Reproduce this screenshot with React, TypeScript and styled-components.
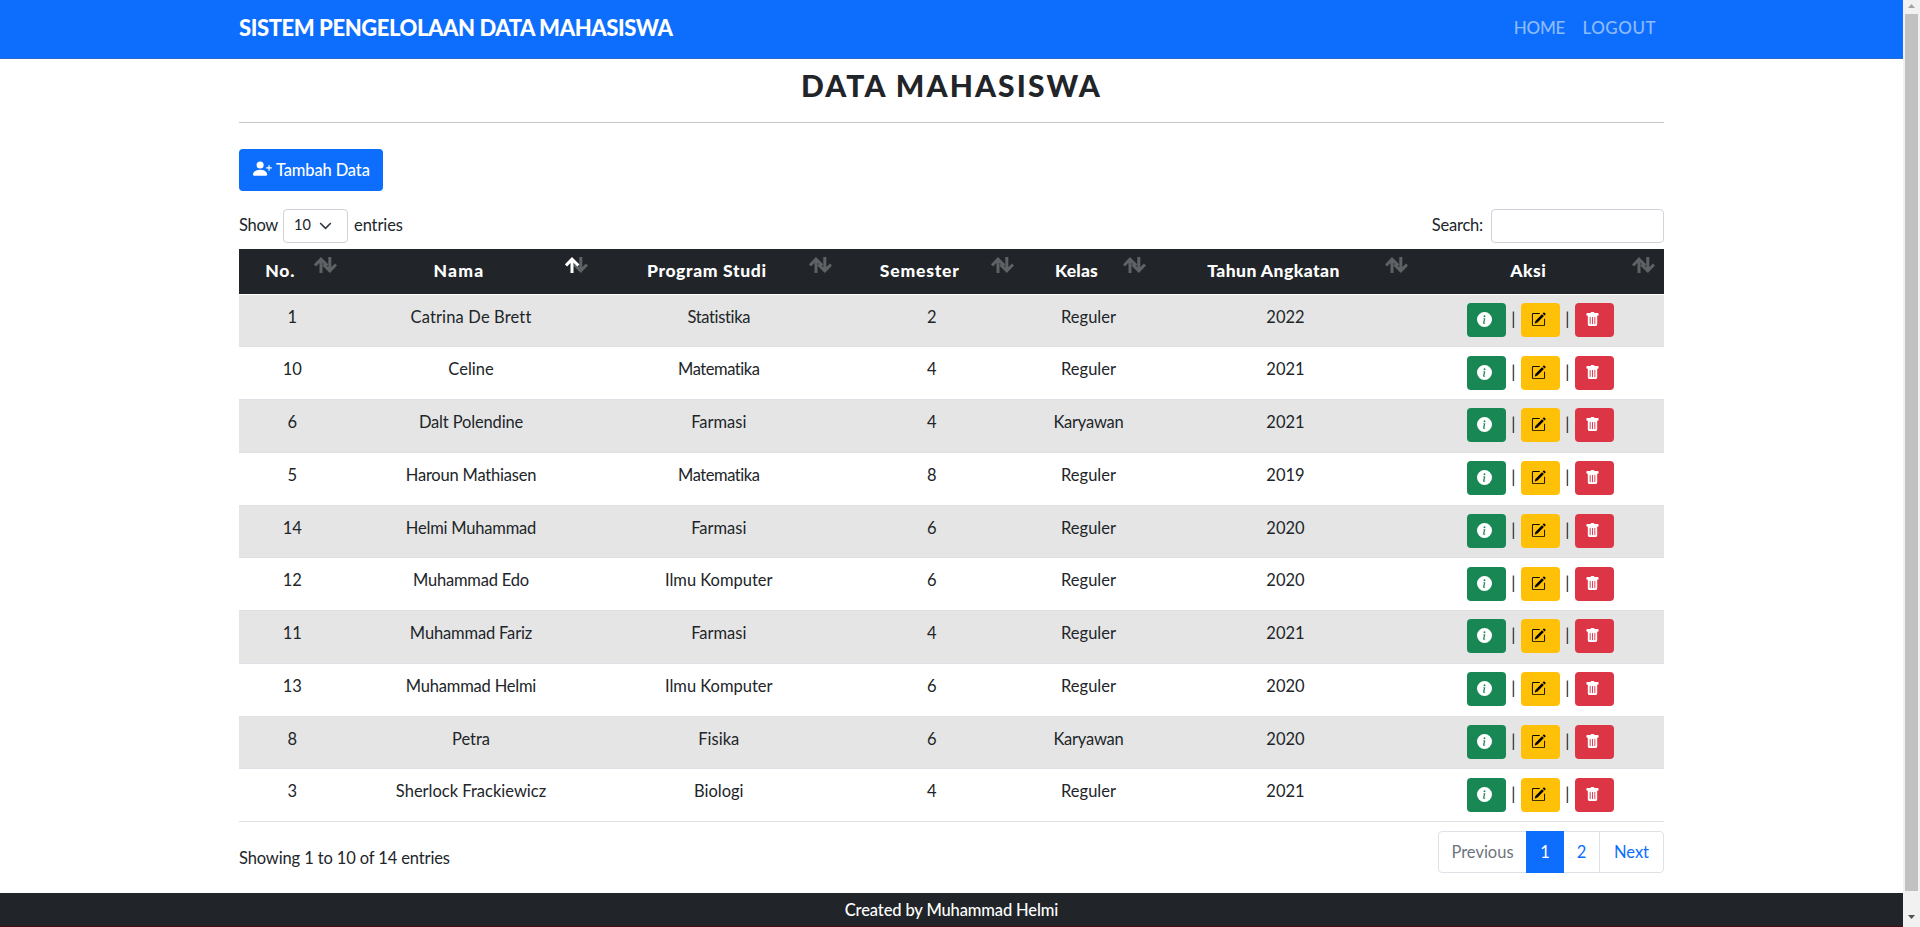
import React from "react";
import styled, { createGlobalStyle } from "styled-components";
import { BsInfoCircleFill, BsPencilSquare, BsPersonPlusFill, BsTrashFill } from "react-icons/bs";

const GlobalStyle = createGlobalStyle`
  *, *::before, *::after { box-sizing: border-box; }
  body {
    margin: 0;
    overflow: hidden;
    background: #fff;
    color: #212529;
    font-family: Lato, "Liberation Sans", sans-serif;
    font-size: 16.5px;
    line-height: 26px;
    font-variant-ligatures: none;
  }
`;

const Screen = styled.div`
  display: flex;
  height: 927px;
  width: 1920px;
`;

const Page = styled.div`
  display: flex;
  flex-direction: column;
  width: 1903px;
`;

const Nav = styled.nav`
  display: flex;
  align-items: center;
  justify-content: space-between;
  height: 59px;
  padding: 0 247px 3px 239px;
  background: #0d6efd;
  border-bottom: 1px solid #2a6bd0;
`;

const Brand = styled.span`
  color: #fff;
  font-size: 22px;
  font-weight: 900;
  letter-spacing: -0.42px;
  white-space: nowrap;
`;

const NavLinks = styled.div`
  display: flex;
  gap: 17.5px;
  padding-top: 1px;
`;

const NavLink = styled.a<{ $track: number }>`
  color: #8dbbfe;
  font-size: 17px;
  font-weight: 500;
  letter-spacing: ${(p) => p.$track}px;
`;

const Container = styled.main`
  display: flex;
  flex-direction: column;
  width: 1425px;
  margin-left: 239px;
  height: 834px;
`;

const Title = styled.h1`
  margin: 0;
  height: 63px;
  padding-top: 8px;
  text-align: center;
  font-size: 30px;
  font-weight: 900;
  line-height: 36px;
  letter-spacing: 2.1px;
`;

const Divider = styled.hr`
  width: 100%;
  height: 1px;
  margin: 0 0 26px;
  border: 0;
  background: #c4c5c6;
`;

const AddButton = styled.button`
  display: flex;
  align-items: center;
  gap: 4px;
  width: 144px;
  height: 42px;
  padding: 0 13px 0 14px;
  border: 0;
  border-radius: 4px;
  background: #0d6efd;
  color: #fff;
  font: 500 16.5px Lato, sans-serif;
  letter-spacing: -0.15px;
  white-space: nowrap;

  svg { position: relative; top: -2px; flex: none; }
`;

const Controls = styled.div`
  display: flex;
  justify-content: space-between;
  align-items: center;
  height: 34px;
  margin: 18px 0 6px;
`;

const Control = styled.label`
  display: flex;
  align-items: center;
  gap: 6px;
`;

const ControlText = styled.span<{ $track: number }>`
  padding-bottom: 3px;
  letter-spacing: ${(p) => p.$track}px;
`;

const LengthSelect = styled.span`
  display: flex;
  align-items: center;
  justify-content: space-between;
  width: 65px;
  height: 34px;
  margin-left: -1px;
  padding: 0 15px 2px 10px;
  border: 1px solid #ced4da;
  border-radius: 4px;
  font-size: 14.5px;
`;

const SearchInput = styled.input`
  width: 173px;
  height: 34px;
  margin-left: 2px;
  border: 1px solid #ced4da;
  border-radius: 4px;
  background: #fff;
`;

const columns = "106.5px 251px 244.5px 181.5px 132px 262px 247.5px";

const HeaderRow = styled.div`
  display: grid;
  grid-template-columns: ${columns};
  flex: none;
  height: 45px;
  margin-bottom: 0.5px;
  background: #212529;
  color: #fff;
`;

const HeaderCell = styled.div<{ $track: number }>`
  position: relative;
  padding: 9px 33px 0 9px;
  text-align: center;
  font-size: 17.5px;
  font-weight: 900;
  letter-spacing: ${(p) => p.$track}px;
  white-space: nowrap;
`;

const SortMark = styled.svg`
  position: absolute;
  top: 8px;
  right: 9px;
`;

const Row = styled.div<{ $striped: boolean }>`
  display: grid;
  grid-template-columns: ${columns};
  flex: none;
  height: 52.75px;
  border-bottom: 1px solid #dee2e6;
  background: ${(p) => (p.$striped ? "#e5e5e5" : "#fff")};
`;

const Cell = styled.div<{ $track: number }>`
  padding-top: 9px;
  text-align: center;
  letter-spacing: ${(p) => p.$track}px;
  white-space: nowrap;
`;

const Actions = styled.div`
  display: flex;
  justify-content: center;
  padding-top: 8.4px;
`;

const Pipe = styled.span`
  width: 15px;
  padding-top: 3px;
  text-align: center;
`;

const ActionButton = styled.button<{ $tone: string; $ink: string }>`
  display: flex;
  align-items: center;
  width: 39px;
  height: 34px;
  padding: 0 0 1px 10px;
  border: 0;
  border-radius: 4px;
  background: ${(p) => p.$tone};
  color: ${(p) => p.$ink};
`;

const Bottom = styled.div`
  display: flex;
  justify-content: space-between;
  padding-top: 9px;
`;

const Info = styled.span`
  padding-top: 14px;
  letter-spacing: -0.13px;
`;

const Pagination = styled.div`
  display: flex;
  height: 42px;
  border: 1px solid #dee2e6;
  border-radius: 4px;
`;

const PageLink = styled.a<{ $width: number; $active?: boolean; $muted?: boolean; $divided?: boolean }>`
  width: ${(p) => p.$width}px;
  height: ${(p) => (p.$active ? 42 : 40)}px;
  margin-top: ${(p) => (p.$active ? -1 : 0)}px;
  padding-top: ${(p) => (p.$active ? 8 : 7)}px;
  border-left: ${(p) => (p.$divided ? "1px solid #dee2e6" : "0")};
  text-align: center;
  background: ${(p) => (p.$active ? "#0d6efd" : "transparent")};
  color: ${(p) => (p.$active ? "#fff" : p.$muted ? "#6c757d" : "#0d6efd")};
`;

const Footer = styled.footer`
  height: 34px;
  padding-top: 4px;
  border-bottom: 1px solid #4a0d12;
  background: #212529;
  color: #fff;
  text-align: center;
  font-weight: 500;
  letter-spacing: -0.13px;
`;

const Scrollbar = styled.div`
  display: flex;
  flex-direction: column;
  align-items: center;
  justify-content: space-between;
  width: 17px;
  height: 927px;
  background: #f1f1f1;
`;

const ScrollThumb = styled.div`
  width: 13px;
  height: 877px;
  background: #c1c1c1;
`;

const ScrollArrow = styled.svg<{ $space: number }>`
  height: ${(p) => p.$space}px;
  width: 17px;
`;

const headers = [
  { label: "No.", track: 0.8 },
  { label: "Nama", track: 1.25, sorted: true },
  { label: "Program Studi", track: 0.65 },
  { label: "Semester", track: 0.8 },
  { label: "Kelas", track: 0.2 },
  { label: "Tahun Angkatan", track: 0.45 },
  { label: "Aksi", track: 0.5 },
];

const students = [
  ["1", "Catrina De Brett", "Statistika", "2", "Reguler", "2022"],
  ["10", "Celine", "Matematika", "4", "Reguler", "2021"],
  ["6", "Dalt Polendine", "Farmasi", "4", "Karyawan", "2021"],
  ["5", "Haroun Mathiasen", "Matematika", "8", "Reguler", "2019"],
  ["14", "Helmi Muhammad", "Farmasi", "6", "Reguler", "2020"],
  ["12", "Muhammad Edo", "Ilmu Komputer", "6", "Reguler", "2020"],
  ["11", "Muhammad Fariz", "Farmasi", "4", "Reguler", "2021"],
  ["13", "Muhammad Helmi", "Ilmu Komputer", "6", "Reguler", "2020"],
  ["8", "Petra", "Fisika", "6", "Karyawan", "2020"],
  ["3", "Sherlock Frackiewicz", "Biologi", "4", "Reguler", "2021"],
];

const tracking: Record<string, number> = {
  "Catrina De Brett": 0.15,
  "Dalt Polendine": -0.15,
  "Haroun Mathiasen": -0.2,
  "Helmi Muhammad": -0.2,
  "Muhammad Edo": -0.2,
  "Muhammad Fariz": -0.15,
  "Muhammad Helmi": -0.2,
  Statistika: -0.35,
  Matematika: -0.45,
  Karyawan: -0.2,
};

function SortIcon({ sorted }: { sorted?: boolean }) {
  return (
    <SortMark width="23" height="16" viewBox="0 0 23 16" fill="none" strokeWidth="3">
      <path d="M15.8 0V13M9.3 7.5L15.8 13.8L22 7.5" stroke="#5f6265" />
      <path d="M7 16V3M1 8.5L7 2.2L13.4 8.5" stroke={sorted ? "#fff" : "#5f6265"} />
    </SortMark>
  );
}

export default function App() {
  return (
    <>
      <GlobalStyle />
      <Screen>
        <Page>
          <Nav>
            <Brand>SISTEM PENGELOLAAN DATA MAHASISWA</Brand>
            <NavLinks>
              <NavLink $track={-0.3}>HOME</NavLink>
              <NavLink $track={0.5}>LOGOUT</NavLink>
            </NavLinks>
          </Nav>
          <Container>
            <Title>DATA MAHASISWA</Title>
            <Divider />
            <AddButton>
              <BsPersonPlusFill size={19} />
              Tambah Data
            </AddButton>
            <Controls>
              <Control>
                <ControlText $track={-0.3}>Show</ControlText>
                <LengthSelect>
                  10
                  <svg width="13" height="13" viewBox="0 0 16 16" fill="none" stroke="#343a40" strokeWidth="2">
                    <path d="M2 5.5l6 6 6-6" strokeLinecap="round" strokeLinejoin="round" />
                  </svg>
                </LengthSelect>
                <ControlText $track={-0.1}>entries</ControlText>
              </Control>
              <Control>
                <ControlText $track={-0.2}>Search:</ControlText>
                <SearchInput />
              </Control>
            </Controls>
            <HeaderRow>
              {headers.map((h) => (
                <HeaderCell key={h.label} $track={h.track}>
                  {h.label}
                  <SortIcon sorted={h.sorted} />
                </HeaderCell>
              ))}
            </HeaderRow>
            {students.map((s, i) => (
              <Row key={s[0]} $striped={i % 2 === 0}>
                {s.map((value, c) => (
                  <Cell key={c} $track={tracking[value] ?? 0}>{value}</Cell>
                ))}
                <Actions>
                  <ActionButton $tone="#198754" $ink="#fff"><BsInfoCircleFill size={15} /></ActionButton>
                  <Pipe>|</Pipe>
                  <ActionButton $tone="#ffc107" $ink="#000"><BsPencilSquare size={15} /></ActionButton>
                  <Pipe>|</Pipe>
                  <ActionButton $tone="#dc3545" $ink="#fff"><BsTrashFill size={15} /></ActionButton>
                </Actions>
              </Row>
            ))}
            <Bottom>
              <Info>Showing 1 to 10 of 14 entries</Info>
              <Pagination>
                <PageLink $width={87} $muted>Previous</PageLink>
                <PageLink $width={38} $active>1</PageLink>
                <PageLink $width={35}>2</PageLink>
                <PageLink $width={64} $divided>Next</PageLink>
              </Pagination>
            </Bottom>
          </Container>
          <Footer>Created by Muhammad Helmi</Footer>
        </Page>
        <Scrollbar>
          <ScrollArrow $space={14} viewBox="0 0 17 14"><path d="M5 8l3.5-4L12 8z" fill="#a3a3a3" /></ScrollArrow>
          <ScrollThumb />
          <ScrollArrow $space={36} viewBox="0 0 17 36"><path d="M5 24l3.5 4 3.5-4z" fill="#505050" /></ScrollArrow>
        </Scrollbar>
      </Screen>
    </>
  );
}
